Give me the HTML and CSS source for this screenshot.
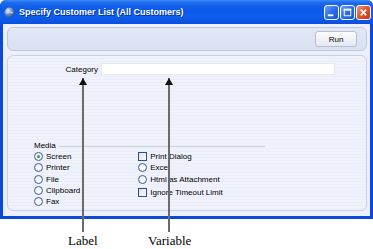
FILE: index.html
```html
<!DOCTYPE html>
<html lang="en">
<head>
    <meta charset="UTF-8">
    <title>Specify Customer List</title>
    <link rel="stylesheet" href="styles.css">
</head>
<body>
    <div class="window">
        <div class="titlebar">
            <svg class="appIcon" width="11" height="11" viewBox="0 0 11 11">
                <defs>
                    <radialGradient id="globe" cx="0.35" cy="0.3" r="0.8">
                        <stop offset="0" stop-color="#e8f0ff"/>
                        <stop offset="0.5" stop-color="#6f8fc9"/>
                        <stop offset="1" stop-color="#23407a"/>
                    </radialGradient>
                </defs>
                <circle cx="5.5" cy="5.5" r="5" fill="url(#globe)"/>
                <path d="M2 6 Q5 4 9 6" stroke="#c8d6f0" stroke-width="1" fill="none"/>
            </svg>
            <span class="title">Specify Customer List (All Customers)</span>
            <div class="winButtons">
                <span class="winBtn"><svg width="14" height="14" viewBox="0 0 14 14"><rect x="3" y="9" width="6" height="2" fill="#fff"/></svg></span>
                <span class="winBtn"><svg width="14" height="14" viewBox="0 0 14 14"><rect x="3.5" y="3.5" width="7" height="7" fill="none" stroke="#fff" stroke-width="1"/><rect x="3" y="3" width="8" height="2" fill="#fff"/></svg></span>
                <span class="winBtn close"><svg width="14" height="14" viewBox="0 0 14 14"><path d="M4 4 L10 10 M10 4 L4 10" stroke="#fff" stroke-width="1.8"/></svg></span>
            </div>
        </div>

        <div class="client">
            <div class="toolbar">
                <button class="runBtn">Run</button>
            </div>

            <div class="panel">
                <div class="fieldRow">
                    <label class="fieldLabel">Category</label>
                    <span class="fieldInput"></span>
                </div>

                <div class="media">
                    <div class="legend"><span>Media</span><span class="rule"></span></div>
                    <div class="mediaCols">
                        <ul class="opts">
                            <li><span class="radio on"></span>Screen</li>
                            <li><span class="radio"></span>Printer</li>
                            <li><span class="radio"></span>File</li>
                            <li><span class="radio"></span>Clipboard</li>
                            <li><span class="radio"></span>Fax</li>
                        </ul>
                        <ul class="opts">
                            <li><span class="check"></span>Print Dialog</li>
                            <li><span class="radio"></span>Excel</li>
                            <li><span class="radio"></span>Html as Attachment</li>
                            <li class="gapTop"><span class="check"></span>Ignore Timeout Limit</li>
                        </ul>
                    </div>
                </div>
            </div>
        </div>
    </div>

    <div class="captions">
        <span class="caption capLabel">Label</span>
        <span class="caption capVariable">Variable</span>
    </div>

    <!-- pointer arrows drawn over the window -->
    <div class="arrow arrowLabel"></div>
    <div class="arrow arrowVariable"></div>
</body>
</html>
```

FILE: styles.css
```css
/* Window */
body {
    margin: 0;
    padding: 0;
    background: #fff;
    font-family: "Liberation Sans", Arial, sans-serif;
    font-size: 8px;
    color: #000;
    position: relative;
    width: 373px;
    height: 249px;
    overflow: hidden;
}

.window {
    width: 373px;
    height: 219px;
    background: #0b48dc;
    display: flex;
    flex-direction: column;
    box-sizing: border-box;
    padding: 0 3px 3px 3px;
    border-radius: 6px 6px 0 0;
}

.titlebar {
    height: 24px;
    margin: 0 -3px;
    padding: 0 4px;
    display: flex;
    align-items: center;
    gap: 4px;
    border-radius: 6px 6px 0 0;
    background: linear-gradient(to bottom, #3a8cf8 0%, #1c68ee 12%, #0b5ae8 40%, #0d5fee 70%, #0a4ede 100%);
}

.appIcon {
    flex: none;
    margin-top: 1px;
}

.title {
    color: #fff;
    font-weight: bold;
    font-size: 9px;
    text-shadow: 1px 1px 0 #0a2e9a;
    flex: 1;
}

.winButtons {
    display: flex;
    gap: 1px;
    margin-right: -2px;
}

.winBtn {
    width: 15px;
    height: 15px;
    box-sizing: border-box;
    border: 1px solid #fff;
    border-radius: 3px;
    background: linear-gradient(135deg, #6ea2ff 0%, #2a6cf0 50%, #1b55d8 100%);
    display: flex;
    align-items: center;
    justify-content: center;
}

.winBtn svg {
    width: 13px;
    height: 13px;
}

.winBtn.close {
    background: linear-gradient(135deg, #f09a7c 0%, #e0532e 50%, #c8391a 100%);
}

/* Client area */
.client {
    flex: 1;
    background: #edf0f8;
    padding: 3px 3px 5px 4px;
    display: flex;
    flex-direction: column;
    gap: 4px;
}

.toolbar {
    height: 22px;
    border: 1px solid #bcc8e6;
    border-radius: 6px;
    background: linear-gradient(to bottom, #e3e8f5, #d9e0f1);
    display: flex;
    align-items: center;
    justify-content: flex-end;
    padding-right: 9px;
}

.runBtn {
    width: 42px;
    height: 16px;
    padding: 0;
    font-family: "Liberation Sans", Arial, sans-serif;
    font-size: 8px;
    color: #000;
    border: 1px solid #b5bfd4;
    border-radius: 3px;
    background: linear-gradient(to bottom, #fbfcfe, #e4e8f1);
}

.panel {
    flex: 1;
    border: 1px solid #c6d0ea;
    border-radius: 6px;
    background: repeating-linear-gradient(to bottom, #eff2fa 0px, #eff2fa 2px, #ebeef8 2px, #ebeef8 3px);
    padding-top: 7px;
}

.fieldRow {
    display: flex;
    align-items: center;
    gap: 3px;
}

.fieldLabel {
    width: 90px;
    text-align: right;
}

.fieldInput {
    width: 234px;
    height: 12px;
    background: #fff;
    border: 1px solid #e6e9f2;
    box-sizing: border-box;
}

/* Media group */
.media {
    margin: 65px 0 0 26px;
}

.legend {
    display: flex;
    align-items: center;
    gap: 3px;
    height: 10px;
}

.rule {
    width: 206px;
    height: 1px;
    background: #c9cfdd;
    margin-top: 3px;
}

.mediaCols {
    display: flex;
    gap: 58px;
    margin-top: 1px;
}

.opts {
    list-style-type: none;
    margin: 0;
    padding: 0;
}

.opts li {
    height: 11.3px;
    display: flex;
    align-items: center;
    gap: 3px;
}

.opts li.gapTop {
    margin-top: 2px;
}

.radio {
    width: 9px;
    height: 9px;
    box-sizing: border-box;
    border: 1px solid #3b5d9e;
    border-radius: 50%;
    background: radial-gradient(circle at 60% 60%, #fff 0%, #e6e9f0 100%);
    display: flex;
    align-items: center;
    justify-content: center;
}

.radio.on::after {
    content: "";
    width: 3px;
    height: 3px;
    border-radius: 50%;
    background: #2fa62f;
}

.check {
    width: 9px;
    height: 9px;
    box-sizing: border-box;
    border: 1px solid #2c4f86;
    background: linear-gradient(135deg, #dcdfe6, #fafbfc);
}

/* Captions under the window */
.captions {
    position: relative;
    height: 30px;
    font-family: "Liberation Serif", "Times New Roman", serif;
    font-size: 13px;
}

.caption {
    position: absolute;
    top: 14px;
}

.capLabel {
    left: 68px;
}

.capVariable {
    left: 148px;
}

/* Arrows */
.arrow {
    position: absolute;
    top: 78px;
    width: 2px;
    height: 154px;
    background: #6a6a6a;
}

.arrow::before {
    content: "";
    position: absolute;
    top: 0;
    left: -3px;
    border-left: 4px solid transparent;
    border-right: 4px solid transparent;
    border-bottom: 7px solid #111;
}

.arrowLabel {
    left: 82px;
}

.arrowVariable {
    left: 168px;
}
```
